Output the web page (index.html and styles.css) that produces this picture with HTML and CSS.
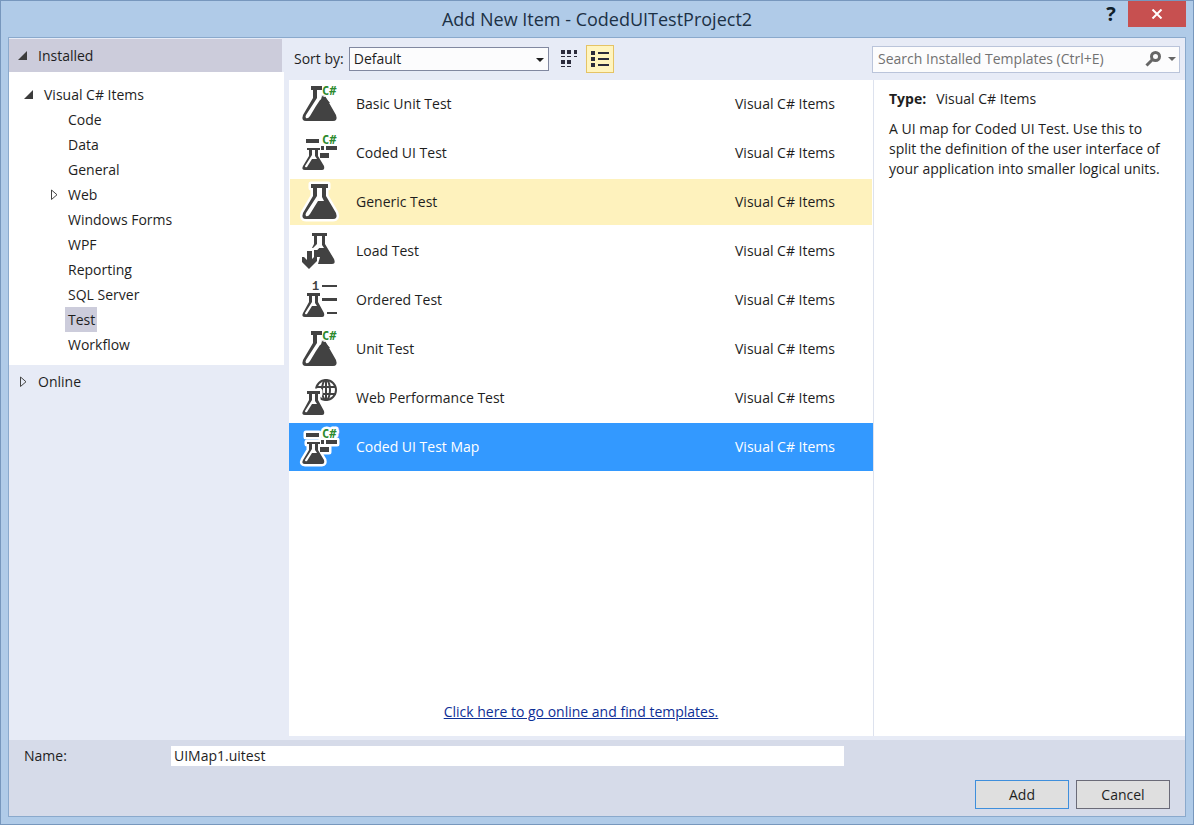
FILE: index.html
```html
<!DOCTYPE html>
<html lang="en">
<head>
<meta charset="utf-8">
<title>Add New Item - CodedUITestProject2</title>
<link rel="stylesheet" href="styles.css">
</head>
<body>
<svg class="defs" aria-hidden="true">
  <defs>
    <g id="flask">
      <path d="M11 5H28V9H26V17L36 34Q38 40 33 40H6Q1 40 3 34L13 17V9H11Z"/>
      <path class="hole" d="M17 9H22V18L24 22H18L10 35Q8 38 6 37Q5 36 6 34L17 17Z"/>
    </g>
    <g id="flask-small">
      <path d="M7 16H20V19H18V25L24 36Q25 40 22 40H5Q1 40 3 36L9 25V19H7Z"/>
      <path class="hole" d="M12 19H15V26L17 29H12L7 37Q5 38 5 36L12 25Z"/>
    </g>
    <g id="unit">
      <path d="M11 5H22V9H21V14L25 15L28 20L36 34Q38 40 33 40H6Q1 40 3 34L13 17V9H11Z"/>
      <path class="hole" d="M17 9H21V14L26 15L24 17L20 19L16 25L10 35Q8 38 6 37Q5 36 6 34L17 17Z"/>
      <path d="M22 15L25 16L30 22H20Z"/>
      <text class="lang" x="22" y="14">C#</text>
    </g>
    <g id="coded">
      <path d="M6 9H19V13H6ZM21 16H24V20H21ZM26 16H37V20H26ZM20 23H29V28H20Z"/>
      <path d="M7 18H20V20H18V26L24 36Q25 40 22 40H5Q1 40 3 36L9 26V20H7Z"/>
      <path class="hole" d="M12 20H15V26L17 29H12L7 37Q5 38 5 36L12 25Z"/>
      <text class="lang" x="22" y="14">C#</text>
    </g>
    <g id="load">
      <path d="M12 5H27V8H25V16L34 31Q36 36 32 36H18L20 29H14V22H17L19 20H12L14 16V8H12Z"/>
      <path class="hole" d="M17 8H22V17L24 20H19L17 22H11L17 16Z"/>
      <path d="M7 23H12V31L15 28H17V33L9 41L2 34V29H4L7 32Z"/>
    </g>
    <g id="ordered">
      <text class="digit" x="12" y="13">1</text>
      <path d="M22 8H37V10H22ZM22 21H37V24H22ZM27 35H37V37H27Z"/>
      <use href="#flask-small"/>
    </g>
    <g id="web">
      <g class="globe"><circle cx="26" cy="15" r="10"/><ellipse cx="26" cy="15" rx="4" ry="10"/><path d="M16 12H36M16 19H36M26 5V25"/></g>
      <use href="#flask-small" class="halo"/>
      <use href="#flask-small"/>
    </g>
  </defs>
</svg>
<main class="window">
  <header class="titlebar">
    <h1 class="title">Add New Item - CodedUITestProject2</h1>
    <div class="window-buttons">
      <button class="help" aria-label="Help">?</button>
      <button class="close" aria-label="Close"><svg width="12" height="10" viewBox="0 0 12 10"><path d="M1.500 .5L10.500 9.500M10.500 .5L1.500 9.500"/></svg></button>
    </div>
  </header>
  <div class="client">
    <nav class="sidebar" aria-label="Template categories">
      <button class="group active"><svg class="arrow" viewBox="0 0 9 9"><path d="M9 0V9H0Z"/></svg>Installed</button>
      <div class="tree">
        <button class="node root"><svg class="arrow" viewBox="0 0 9 9"><path d="M9 0V9H0Z"/></svg>Visual C# Items</button>
        <button class="node">Code</button>
        <button class="node">Data</button>
        <button class="node">General</button>
        <button class="node parent"><svg class="arrow closed" viewBox="0 0 9 12"><path d="M1.500 1V10.500L7 5.750Z"/></svg>Web</button>
        <button class="node">Windows Forms</button>
        <button class="node">WPF</button>
        <button class="node">Reporting</button>
        <button class="node">SQL Server</button>
        <button class="node current">Test</button>
        <button class="node">Workflow</button>
      </div>
      <button class="group"><svg class="arrow closed" viewBox="0 0 9 12"><path d="M1.500 1V10.500L7 5.750Z"/></svg>Online</button>
    </nav>
    <section class="content">
      <div class="toolbar">
        <label for="sort">Sort by:</label>
        <span class="select"><select id="sort"><option>Default</option></select><svg class="caret" viewBox="0 0 8 4"><path d="M0 0H8L4 4Z"/></svg></span>
        <button class="view" aria-label="Medium icons"><svg width="18" height="20" viewBox="0 0 18 20"><path d="M1 1H5V5H1ZM7 1H11V5H7ZM14 1H17V5H14ZM1 7H5V8H1ZM7 7H11V8H7ZM14 7H17V8H14ZM1 11H5V15H1ZM7 11H11V15H7ZM1 17H5V18H1ZM7 17H11V18H7Z"/></svg></button>
        <button class="view on" aria-label="Small icons"><svg width="18" height="18" viewBox="0 0 18 18"><path d="M0 1H4V5H0ZM0 7H4V11H0ZM0 13H4V17H0ZM7 2H18V4H7ZM7 8H18V10H7ZM7 14H18V16H7Z"/></svg></button>
        <div class="search">
          <input type="search" aria-label="Search Installed Templates" placeholder="Search Installed Templates (Ctrl+E)">
          <svg class="lens" viewBox="0 0 16 16"><circle cx="10.500" cy="5.500" r="4"/><path d="M7.500 8.500L1.500 14.500"/></svg>
          <svg class="caret" viewBox="0 0 8 4"><path d="M0 0H8L4 4Z"/></svg>
        </div>
      </div>
      <div class="panes">
        <div class="list">
          <button class="item"><svg class="icon"><use href="#unit"/></svg><span>Basic Unit Test</span><span>Visual C# Items</span></button>
          <button class="item"><svg class="icon"><use href="#coded"/></svg><span>Coded UI Test</span><span>Visual C# Items</span></button>
          <button class="item hover"><svg class="icon"><use href="#flask" class="halo"/><use href="#flask"/></svg><span>Generic Test</span><span>Visual C# Items</span></button>
          <button class="item"><svg class="icon"><use href="#load"/></svg><span>Load Test</span><span>Visual C# Items</span></button>
          <button class="item"><svg class="icon"><use href="#ordered"/></svg><span>Ordered Test</span><span>Visual C# Items</span></button>
          <button class="item"><svg class="icon"><use href="#unit"/></svg><span>Unit Test</span><span>Visual C# Items</span></button>
          <button class="item"><svg class="icon"><use href="#web"/></svg><span>Web Performance Test</span><span>Visual C# Items</span></button>
          <button class="item selected"><svg class="icon"><use href="#coded" class="halo"/><use href="#coded"/></svg><span>Coded UI Test Map</span><span>Visual C# Items</span></button>
          <a class="online" href="#">Click here to go online and find templates.</a>
        </div>
        <aside class="details">
          <p class="type"><b>Type:</b><span>Visual C# Items</span></p>
          <p>A UI map for Coded UI Test. Use this to split the definition of the user interface of your application into smaller logical units.</p>
        </aside>
      </div>
    </section>
    <footer class="footer">
      <div class="name-row"><label for="name">Name:</label><input id="name" value="UIMap1.uitest"></div>
      <div class="actions"><button class="action primary">Add</button><button class="action">Cancel</button></div>
    </footer>
  </div>
</main>
</body>
</html>
```
FILE: styles.css
```css
* { box-sizing: border-box; }
body { margin: 0; font: 14px/20px "Open Sans", "Noto Sans", sans-serif; color: #1e1e1e; }
button, input, select { font: inherit; color: inherit; border: 0; border-radius: 0; margin: 0; padding: 0; background: none; }
button { text-align: left; }
svg { display: block; flex: none; }
p { margin: 0; }
.defs { position: absolute; width: 0; height: 0; }

.window { display: flex; flex-direction: column; min-height: 100vh; padding: 0 7px 7px; background: #b0cbe8; border: 1px solid #7797bd; }
.titlebar { display: grid; grid-template-columns: 1fr auto 1fr; height: 36px; }
.title { grid-column: 2; margin: 0; font-size: 18px; line-height: 36px; font-weight: 400; color: #1c3145; }
.window-buttons { display: flex; justify-content: flex-end; align-items: flex-start; }
.help { width: 34px; height: 26px; text-align: center; font-size: 20px; font-weight: 700; color: #10212b; }
.close { display: flex; align-items: center; justify-content: center; width: 58px; height: 26px; background: #c75050; }
.close path { stroke: #fff; stroke-width: 2; fill: none; }

.client { flex: 1; display: grid; grid-template-columns: 280px 1fr; grid-template-rows: 1fr auto; border: 1px solid #8aa9cc; background: #e7ebf6; }
.sidebar { display: flex; flex-direction: column; padding-top: 1px; }
.group { display: flex; align-items: center; gap: 11px; height: 33px; padding-left: 9px; margin-right: 7px; }
.group.active { background: #ccccdb; }
.arrow { width: 9px; height: 9px; fill: #3c3c3c; }
.arrow.closed { height: 12px; fill: none; stroke: #444; stroke-width: 1; }
.group .closed { margin: 0 -1px 0 1px; }
.tree { display: flex; flex-direction: column; align-items: flex-start; background: #fff; padding: 10px 0 8px; margin-right: 5px; }
.node { display: flex; align-items: center; height: 25px; margin-left: 56px; padding: 0 2px 0 3px; }
.node.root { margin-left: 15px; padding-left: 0; gap: 11px; }
.node.parent { margin-left: 38px; gap: 9px; }
.node.current { background: #ccccdb; }

.content { display: flex; flex-direction: column; padding-bottom: 4px; min-width: 0; }
.toolbar { display: flex; align-items: center; height: 42px; padding: 0 5px; }
.select { position: relative; width: 200px; margin-left: 5px; }
.select select { display: block; appearance: none; width: 100%; height: 24px; padding: 0 4px; background: #fcfcfd; border: 1px solid #8188a0; }
.caret { width: 8px; height: 4px; fill: #1e1e1e; }
.select .caret { position: absolute; right: 5px; top: 11px; pointer-events: none; }
.view { display: flex; align-items: center; justify-content: center; width: 28px; height: 28px; border: 1px solid transparent; fill: #2b2b3c; margin-left: 6px; }
.view.on { background: #fff4be; border-color: #e5c365; margin-left: 3px; }
.search { display: flex; align-items: center; width: 308px; height: 27px; margin-left: auto; padding: 0 3px 0 5px; background: #fcfcfd; border: 1px solid #bac4da; }
.search input { flex: 1; min-width: 0; outline: 0; }
.search input::placeholder { color: #717171; opacity: 1; }
.lens { width: 16px; height: 16px; margin-right: 7px; fill: none; stroke: #666; stroke-width: 3; }
.search .caret { fill: #666; }

.panes { flex: 1; display: grid; grid-template-columns: 1fr 312px; background: #fff; }
.list { display: flex; flex-direction: column; }
.item { display: grid; grid-template-columns: 56px 1fr 137px; align-items: center; height: 48px; margin-bottom: 1px; padding: 0 0 2px 10px; border: 1px solid transparent; background-clip: padding-box; }
.item.hover { background-color: #fef2bd; }
.item.selected { background: #3399ff; border-color: #3399ff; color: #fff; }
.icon { width: 40px; height: 46px; overflow: visible; fill: #424242; }
.hole { fill: #fff; }
.lang { font: 700 12px "DejaVu Sans Mono", monospace; fill: #2d8a2d; }
.digit { font: 700 12px "Liberation Mono", monospace; }
.globe { fill: none; stroke: #424242; stroke-width: 2; }
.halo { stroke: #fff; stroke-width: 5; stroke-linejoin: round; fill: #fff; }
.online { align-self: center; margin: auto 0 14px; color: #0e2f96; text-decoration: underline; }
.details { padding: 9px 15px; border-left: 1px solid #dde2ee; }
.type { display: flex; gap: 10px; margin-bottom: 10px; }

.footer { grid-column: 1 / -1; padding: 6px 15px 7px; background: #d6dbe9; }
.name-row { display: flex; align-items: center; gap: 16px; }
.name-row label { width: 131px; }
.name-row input { flex: 1; height: 20px; margin-right: 326px; padding: 0 3px; background: #fff; }
.actions { display: flex; justify-content: flex-end; gap: 7px; margin-top: 14px; }
.action { width: 94px; height: 29px; text-align: center; background: #dfdfdf; border: 1px solid #6b6b78; }
.action.primary { border-color: #3f8fdc; }
```
